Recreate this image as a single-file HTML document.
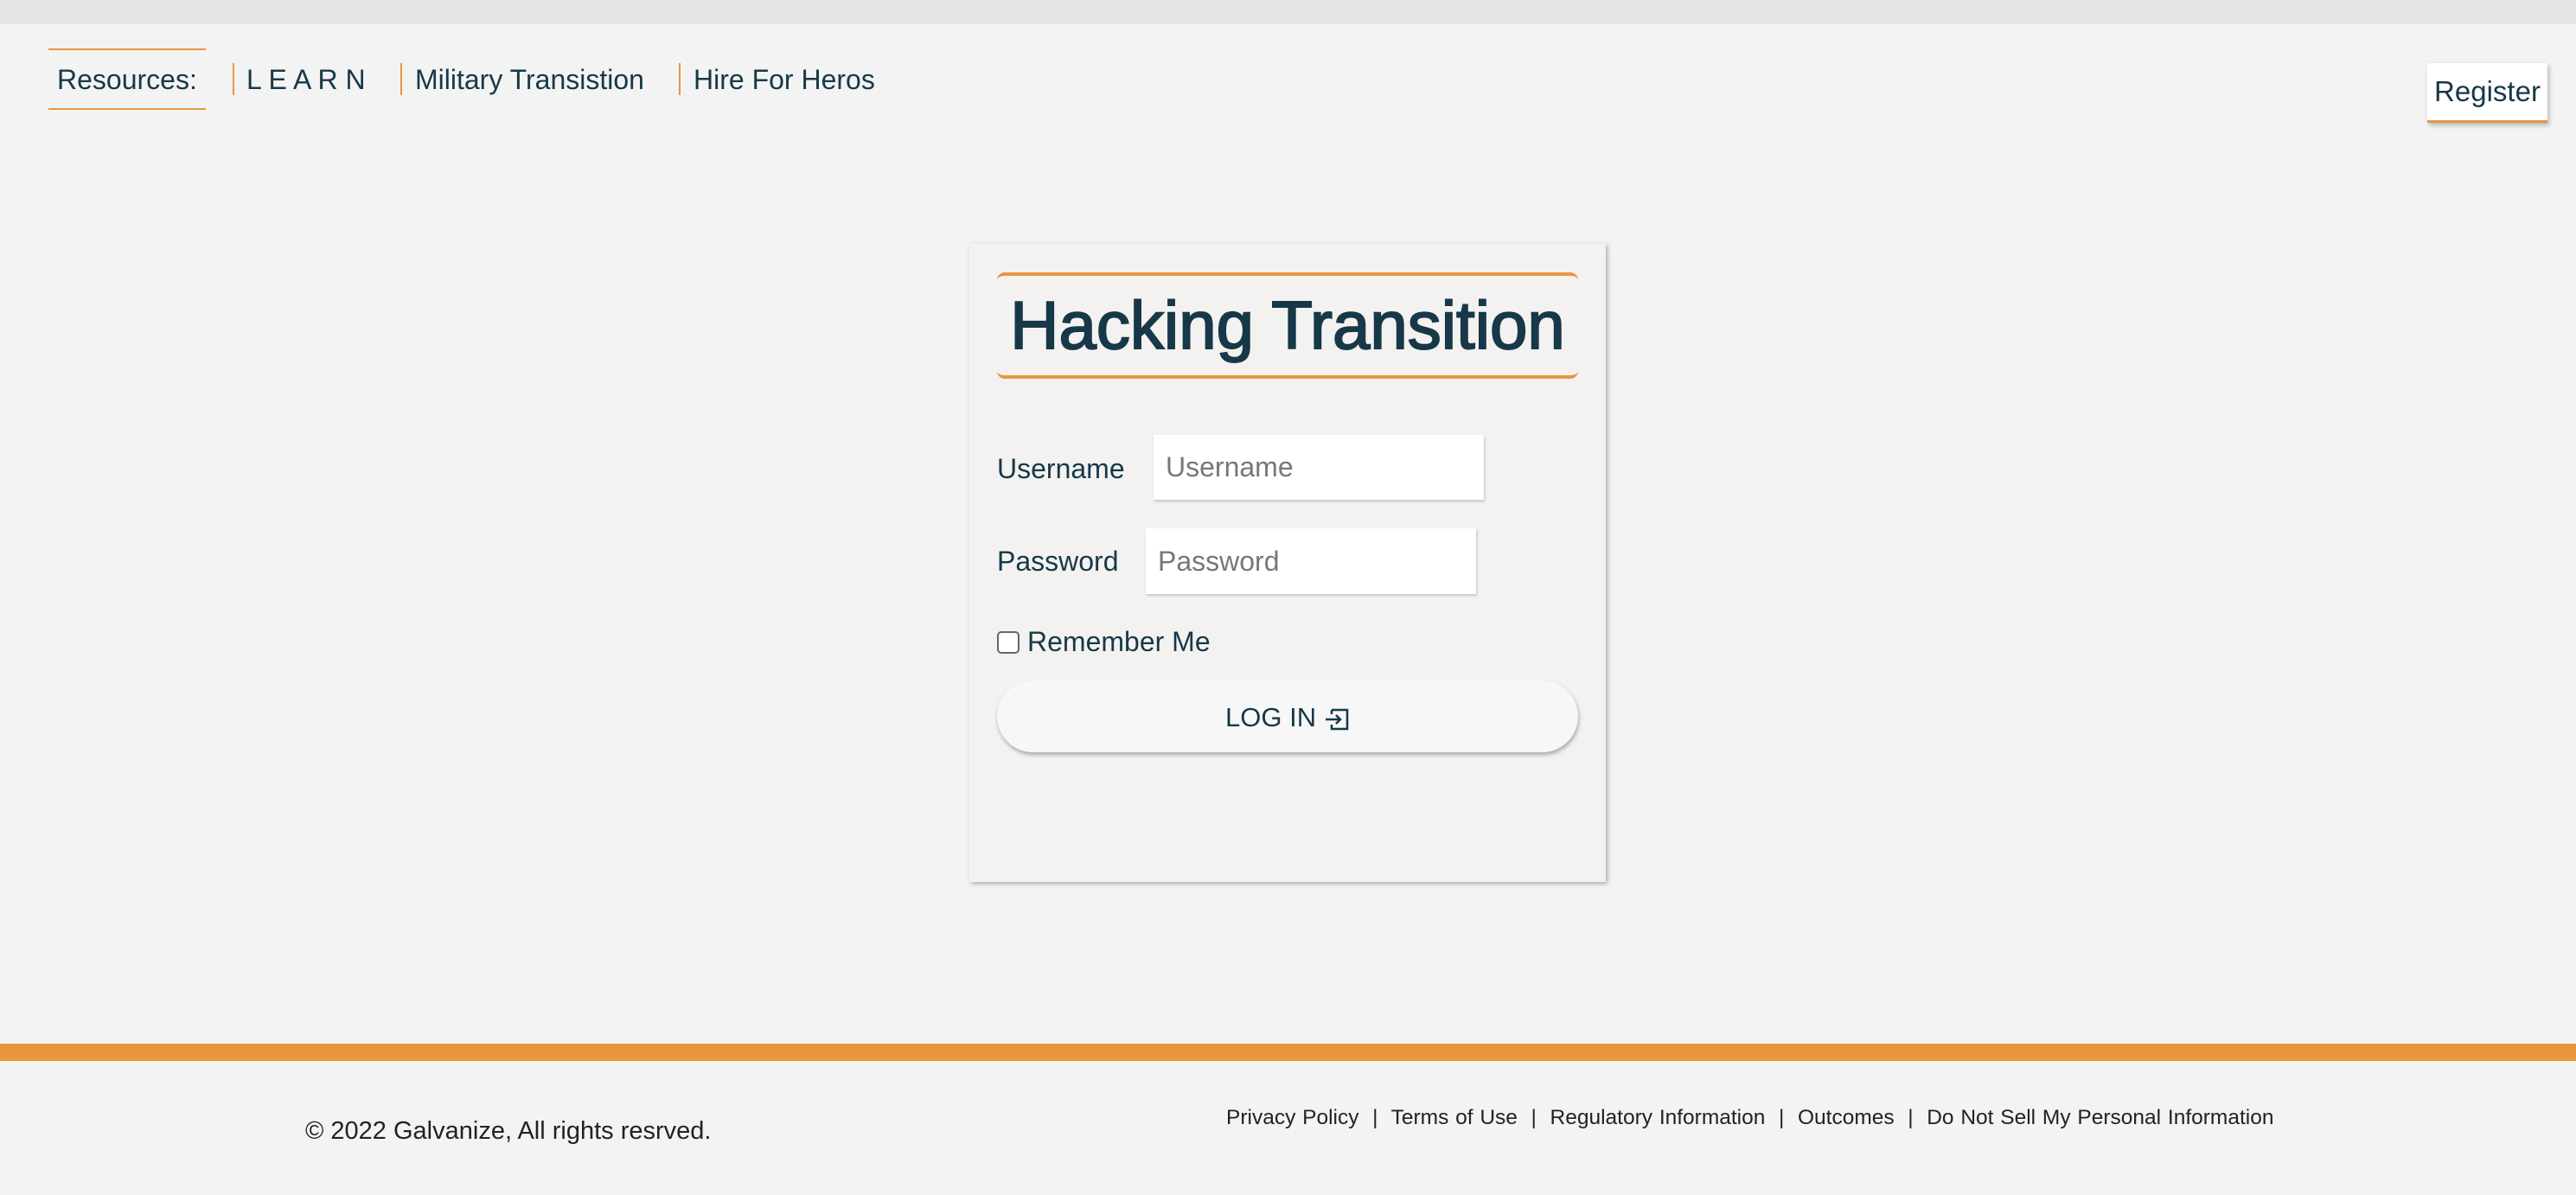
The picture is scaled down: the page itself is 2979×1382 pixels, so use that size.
<!DOCTYPE html>
<html><head><meta charset="utf-8"><style>
*{margin:0;padding:0;box-sizing:border-box}
body{width:2979px;height:1382px;background:#f3f3f3;font-family:"Liberation Sans",Arial,sans-serif;color:#173848;position:relative;overflow:hidden}
.a{position:absolute;white-space:nowrap}
.sep{position:absolute;width:2px;background:#e8963f;top:73px;height:37px}
</style></head><body>
<div class="a" style="left:0;top:0;width:2979px;height:28px;background:#e6e6e6"></div>
<div class="a" style="left:56px;top:56px;width:182px;height:71px;border-top:2px solid #e8963f;border-bottom:2px solid #e8963f"></div>
<div class="a" style="left:66px;top:72px;font-size:32px;line-height:40px">Resources:</div>
<div class="sep" style="left:269px"></div>
<div class="a" style="left:285px;top:72px;font-size:32px;line-height:40px">L E A R N</div>
<div class="sep" style="left:463px"></div>
<div class="a" style="left:480px;top:72px;font-size:32px;line-height:40px">Military Transistion</div>
<div class="sep" style="left:785px"></div>
<div class="a" style="left:802px;top:72px;font-size:32px;line-height:40px">Hire For Heros</div>
<div class="a" style="left:2807px;top:73px;width:139px;height:69px;background:#fff;border-bottom:3px solid #e8963f;box-shadow:2px 3px 5px rgba(0,0,0,.25);font-size:33px;line-height:66px;text-align:center">Register</div>

<div class="a" style="left:1121px;top:282px;width:736px;height:738px;background:#f3f2f0;box-shadow:2px 2px 5px rgba(0,0,0,.3)"></div>
<div class="a" style="left:1153px;top:315px;width:672px;height:123px;border-top:4px solid #e8963f;border-bottom:4px solid #e8963f;border-radius:9px;font-size:78px;line-height:115px;text-align:center;color:#173848;-webkit-text-stroke:2px #173848">Hacking Transition</div>
<div class="a" style="left:1153px;top:522px;font-size:32px;line-height:40px">Username</div>
<div class="a" style="left:1334px;top:503px;width:382px;height:75px;background:#fff;box-shadow:1px 2px 3px rgba(0,0,0,.2);font-size:32px;line-height:75px;padding-left:14px;color:#777">Username</div>
<div class="a" style="left:1153px;top:629px;font-size:32px;line-height:40px">Password</div>
<div class="a" style="left:1325px;top:611px;width:382px;height:76px;background:#fff;box-shadow:1px 2px 3px rgba(0,0,0,.2);font-size:32px;line-height:76px;padding-left:14px;color:#777">Password</div>
<div class="a" style="left:1153px;top:730px;width:26px;height:26px;border:2px solid #666;border-radius:5px;background:#fff"></div>
<div class="a" style="left:1188px;top:722px;font-size:32px;line-height:40px">Remember Me</div>
<div class="a" style="left:1153px;top:787px;width:672px;height:83px;border-radius:42px;background:#f7f7f7;box-shadow:1px 3px 5px rgba(0,0,0,.3)"></div>
<div class="a" style="left:1417px;top:810px;font-size:31px;line-height:40px">LOG IN</div>
<svg class="a" style="left:1532px;top:819px" width="28" height="26" viewBox="0 0 28 26" fill="none" stroke="#173848" stroke-width="2.5"><path d="M8 2H26V24H8V19"/><path d="M8 7V2"/><path d="M1 13H18M13 8L18 13L13 18"/></svg>

<div class="a" style="left:0;top:1207px;width:2979px;height:20px;background:#ea963f"></div>
<div class="a" style="left:353px;top:1291px;font-size:29px;line-height:34px;color:#222">© 2022 Galvanize, All rights resrved.</div>
<div class="a" style="left:1418px;top:1277px;font-size:24.5px;line-height:32px;color:#222;word-spacing:1px">Privacy Policy &nbsp;|&nbsp; Terms of Use &nbsp;|&nbsp; Regulatory Information &nbsp;|&nbsp; Outcomes &nbsp;|&nbsp; Do Not Sell My Personal Information</div>
</body></html>
